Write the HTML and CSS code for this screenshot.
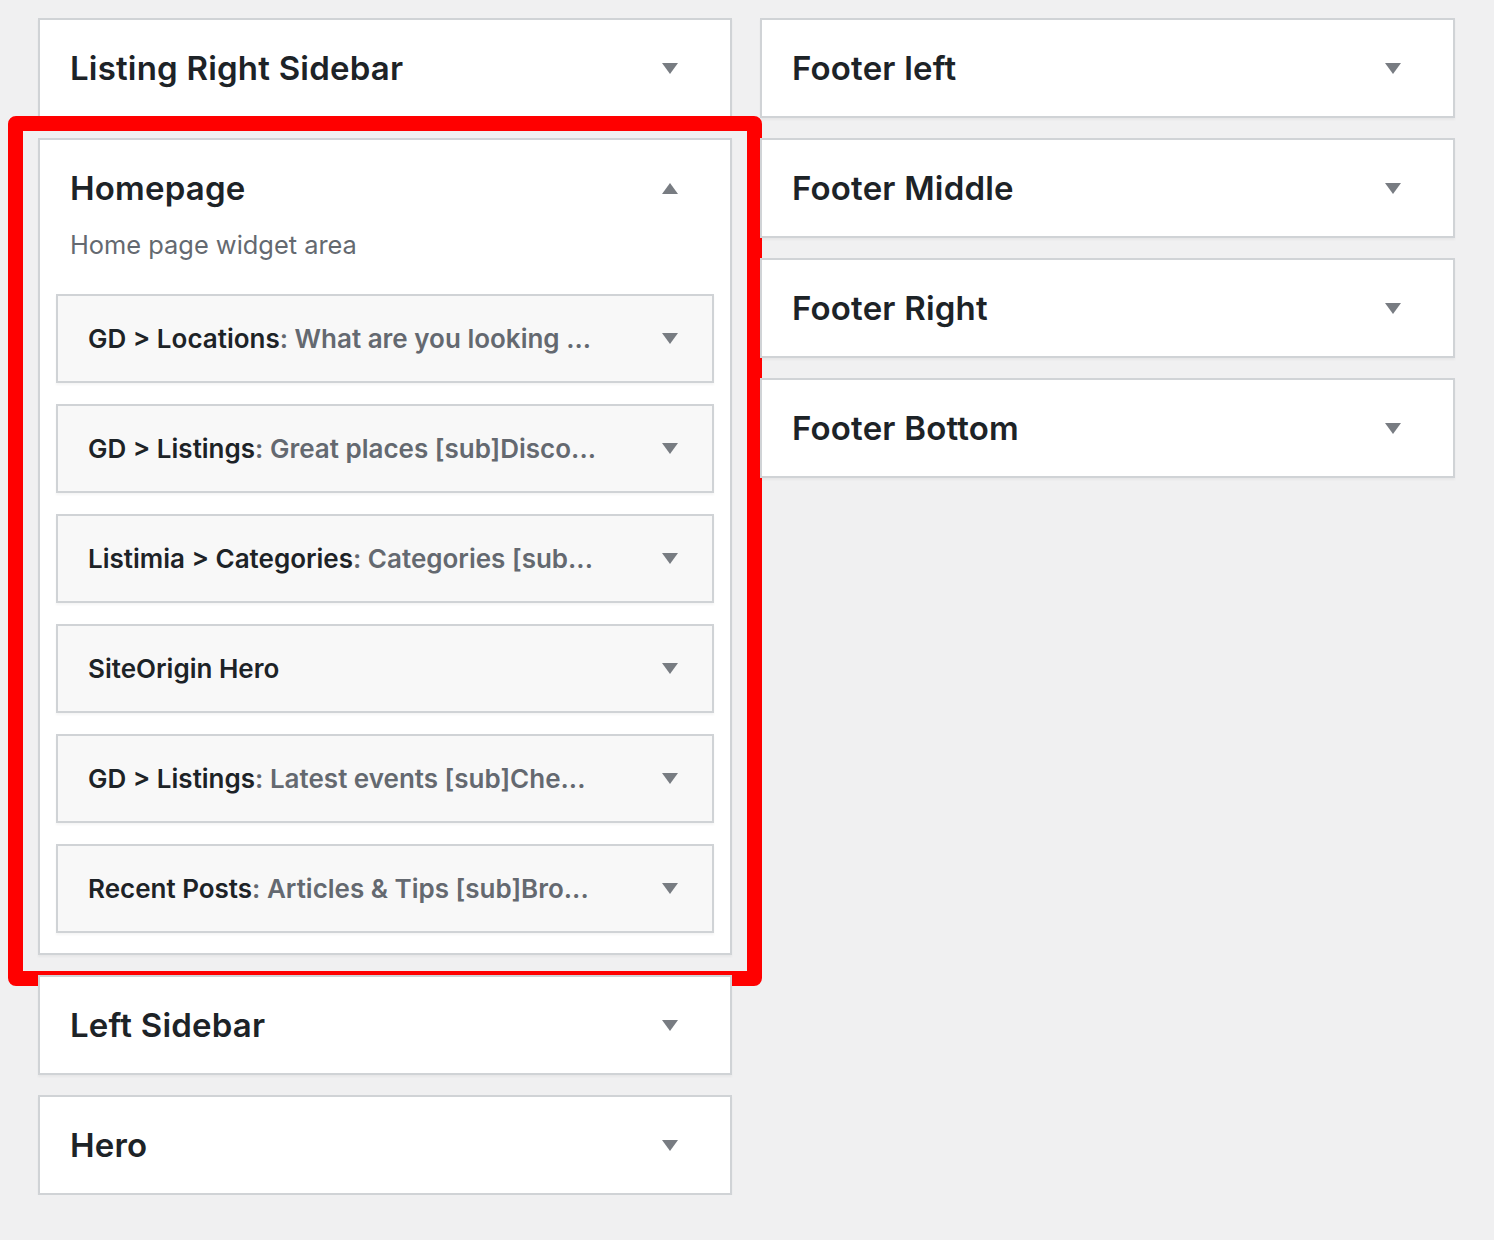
FILE: index.html
```html
<!DOCTYPE html>
<html lang="en">
<head>
    <meta charset="UTF-8">
    <meta name="viewport" content="width=device-width, initial-scale=1.0">
    <title>Widgets</title>
    <link rel="stylesheet" href="styles.css">
</head>
<body>
    <div class="widgets">
        <div class="column">
            <div class="sidebar">
                <div class="sidebar-name">
                    <h2>Listing Right Sidebar</h2>
                    <span class="toggle"></span>
                </div>
            </div>

            <div class="sidebar open">
                <div class="sidebar-name">
                    <h2>Homepage</h2>
                    <span class="toggle"></span>
                </div>
                <p class="sidebar-description">Home page widget area</p>
                <div class="widget-list">
                    <div class="widget">
                        <h3>GD &gt; Locations<span class="in-title">: What are you looking ...</span></h3>
                        <span class="toggle"></span>
                    </div>
                    <div class="widget">
                        <h3>GD &gt; Listings<span class="in-title">: Great places [sub]Disco...</span></h3>
                        <span class="toggle"></span>
                    </div>
                    <div class="widget">
                        <h3>Listimia &gt; Categories<span class="in-title">: Categories [sub...</span></h3>
                        <span class="toggle"></span>
                    </div>
                    <div class="widget">
                        <h3>SiteOrigin Hero</h3>
                        <span class="toggle"></span>
                    </div>
                    <div class="widget">
                        <h3>GD &gt; Listings<span class="in-title">: Latest events [sub]Che...</span></h3>
                        <span class="toggle"></span>
                    </div>
                    <div class="widget">
                        <h3>Recent Posts<span class="in-title">: Articles &amp; Tips [sub]Bro...</span></h3>
                        <span class="toggle"></span>
                    </div>
                </div>
                <div class="highlight"></div>
            </div>

            <div class="sidebar">
                <div class="sidebar-name">
                    <h2>Left Sidebar</h2>
                    <span class="toggle"></span>
                </div>
            </div>

            <div class="sidebar">
                <div class="sidebar-name">
                    <h2>Hero</h2>
                    <span class="toggle"></span>
                </div>
            </div>
        </div>

        <div class="column">
            <div class="sidebar">
                <div class="sidebar-name">
                    <h2>Footer left</h2>
                    <span class="toggle"></span>
                </div>
            </div>
            <div class="sidebar">
                <div class="sidebar-name">
                    <h2>Footer Middle</h2>
                    <span class="toggle"></span>
                </div>
            </div>
            <div class="sidebar">
                <div class="sidebar-name">
                    <h2>Footer Right</h2>
                    <span class="toggle"></span>
                </div>
            </div>
            <div class="sidebar">
                <div class="sidebar-name">
                    <h2>Footer Bottom</h2>
                    <span class="toggle"></span>
                </div>
            </div>
        </div>
    </div>
</body>
</html>
```

FILE: styles.css
```css
body {
    font-family: Inter, "Noto Sans", Roboto, sans-serif;
    margin: 0;
    background-color: #f0f0f1;
    color: #1d2327;
}

.widgets {
    display: grid;
    grid-template-columns: 694px 695px;
    column-gap: 28px;
    align-items: start;
    padding: 18px 0 0 38px;
}

.column {
    display: flex;
    flex-direction: column;
    gap: 20px;
}

.sidebar {
    position: relative;
    background: #fff;
    border: 2px solid #d0d3d6;
    box-shadow: 0 2px 2px rgba(0, 0, 0, 0.04);
}

.sidebar-name {
    display: flex;
    align-items: center;
    justify-content: space-between;
    padding: 27px 52px 27px 30px;
}

.sidebar-name h2 {
    margin: 0;
    font-size: 33px;
    line-height: 42px;
    font-weight: 600;
    letter-spacing: 0.2px;
}

/* little triangle used by every collapsible header */
.toggle {
    width: 0;
    height: 0;
    border-left: 8px solid transparent;
    border-right: 8px solid transparent;
    border-top: 11px solid #787c82;
}

.open .sidebar-name {
    padding-bottom: 0;
}

.open .sidebar-name .toggle {
    border-top: 0;
    border-bottom: 11px solid #787c82;
}

.sidebar-description {
    margin: 21px 30px 0;
    font-size: 25.4px;
    line-height: 30px;
    color: #646970;
}

.widget-list {
    display: flex;
    flex-direction: column;
    gap: 21px;
    padding: 34px 16px 20px;
}

.widget {
    display: flex;
    align-items: center;
    justify-content: space-between;
    height: 89px;
    box-sizing: border-box;
    padding: 0 34px 0 30px;
    background: #f8f8f8;
    border: 2px solid #d0d3d6;
    box-shadow: 0 2px 2px rgba(0, 0, 0, 0.04);
}

.widget h3 {
    margin: 0;
    font-size: 26px;
    font-weight: 600;
    white-space: nowrap;
}

.in-title {
    color: #646970;
}

.highlight {
    position: absolute;
    top: -24px;
    left: -32px;
    right: -32px;
    bottom: -33px;
    border: 15px solid #ff0000;
    border-radius: 8px;
    pointer-events: none;
}
```
